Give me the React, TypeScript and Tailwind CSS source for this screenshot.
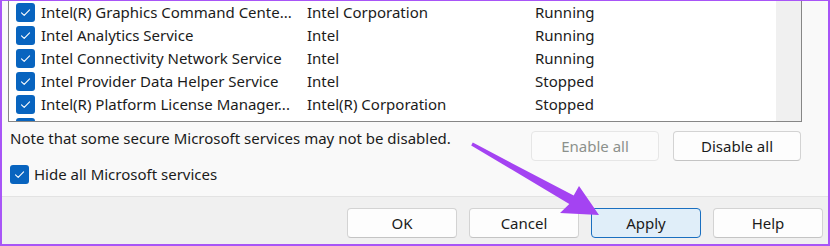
const services = [
  { name: "Intel(R) Graphics Command Cente...", maker: "Intel Corporation", status: "Running" },
  { name: "Intel Analytics Service", maker: "Intel", status: "Running" },
  { name: "Intel Connectivity Network Service", maker: "Intel", status: "Running" },
  { name: "Intel Provider Data Helper Service", maker: "Intel", status: "Stopped" },
  { name: "Intel(R) Platform License Manager...", maker: "Intel(R) Corporation", status: "Stopped" },
  { name: "", maker: "", status: "" },
];

const Check = () => (
  <span className="w-[19px] h-[19px] shrink-0 rounded-[3px] bg-[#0864bf] flex items-center justify-center">
    <svg width="13" height="13" viewBox="0 0 13 13" fill="none">
      <path d="M2.5 6.8 L5.2 9.4 L10.6 3.8" stroke="white" strokeWidth="1.1" strokeLinecap="round" strokeLinejoin="round" />
    </svg>
  </span>
);

const Btn = ({ label, kind }: { label: string; kind?: "primary" | "disabled" }) => {
  if (kind === "primary")
    return (
      <button className="w-[110px] h-[30px] rounded-[4px] border border-[#1a6fc0] bg-[#e0eef9] text-[#1b1b1b]">
        {label}
      </button>
    );
  if (kind === "disabled")
    return (
      <button className="w-[128px] h-[30px] rounded-[4px] border border-[#e6e6e6] bg-[#fbfbfb] text-[#8c918c]">
        {label}
      </button>
    );
  return (
    <button className="w-[110px] h-[30px] rounded-[4px] border border-[#d3d3d3] border-b-[#c4c4c4] bg-[#fdfdfd] text-[#1b1b1b]">
      {label}
    </button>
  );
};

export default function App() {
  return (
    <div className="relative w-[830px] h-[246px] overflow-hidden flex flex-col bg-[#f9f9f9] border-x-2 border-t border-b-2 border-[#a855f7] font-['Noto_Sans',sans-serif] text-[15px] text-[#1b1b1b]">
      <div className="h-[195px] pl-[6px] pr-[26px]">
        <div className="h-[121px] flex overflow-hidden bg-white border-x border-b border-[#868686]">
          <div className="flex-1 pl-[7px]">
            {services.map((s, i) => (
              <div key={i} className="h-[23px] flex items-center">
                <Check />
                <span className="w-[272px] pl-[6px] whitespace-nowrap">{s.name}</span>
                <span className="w-[228px] whitespace-nowrap">{s.maker}</span>
                <span className="whitespace-nowrap">{s.status}</span>
              </div>
            ))}
          </div>
          <div className="w-[25px] bg-[#f0f0f0]" />
        </div>
        <div className="flex items-start justify-between pt-[6px]">
          <p className="pl-[2px] leading-[20px]">Note that some secure Microsoft services may not be disabled.</p>
          <div className="flex gap-[14px] mt-[3px] mr-[1px]">
            <Btn label="Enable all" kind="disabled" />
            <button className="w-[128px] h-[30px] rounded-[4px] border border-[#d3d3d3] border-b-[#c4c4c4] bg-[#fdfdfd]">
              Disable all
            </button>
          </div>
        </div>
        <div className="flex items-center gap-[5px] mt-[2px] pl-[2px]">
          <Check />
          <span>Hide all Microsoft services</span>
        </div>
      </div>
      <div className="flex-1 border-t border-[#e3e3e3] bg-[#f0f0f0] flex justify-end gap-[12px] pt-[11px] pr-[5px]">
        <Btn label="OK" />
        <Btn label="Cancel" />
        <Btn label="Apply" kind="primary" />
        <Btn label="Help" />
      </div>
      <svg className="absolute left-0 top-0 pointer-events-none" width="830" height="246" viewBox="0 0 830 246">
        <polygon
          points="470.8,141.6 571.7,194.6 577,185 597,214 558,212 567.3,202.9 469.2,144.4"
          fill="#a443f2"
        />
      </svg>
    </div>
  );
}
